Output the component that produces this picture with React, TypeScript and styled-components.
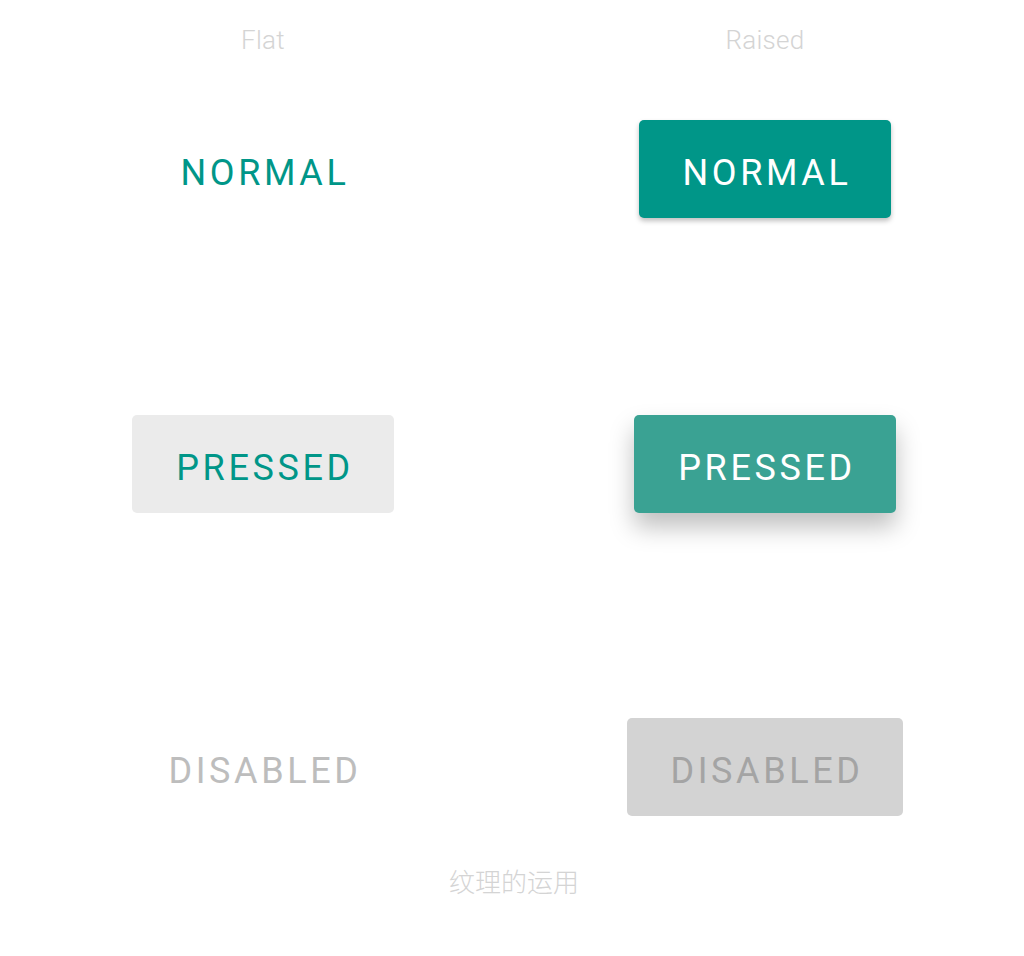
import React from "react";
import styled, { createGlobalStyle, css } from "styled-components";

const GlobalStyle = createGlobalStyle`
  body {
    margin: 0;
    background: #ffffff;
    font-family: Roboto, sans-serif;
  }
`;

const Page = styled.div`
  width: 1004px;
  margin-left: 12px;
  display: flex;
  flex-direction: column;
`;

interface IRowProps {
  top: number;
  height: number;
}

const Row = styled.div<IRowProps>`
  display: grid;
  grid-template-columns: 1fr 1fr;
  margin-top: ${(p) => p.top}px;
  height: ${(p) => p.height}px;
`;

const Cell = styled.div`
  display: flex;
  align-items: center;
  justify-content: center;
`;

const Heading = styled.span`
  font-family: Roboto, sans-serif;
  font-weight: 300;
  font-size: 26px;
  letter-spacing: 0.3px;
  color: #d4d4d4;
`;

type Variant = "normal" | "pressed" | "disabled";

interface IButtonProps {
  variant: Variant;
}

const buttonBase = css`
  height: 98px;
  padding: 7px 40px 0 44px;
  box-sizing: border-box;
  border: none;
  border-radius: 5px;
  display: flex;
  align-items: center;
  justify-content: center;
  font-family: Roboto, sans-serif;
  font-size: 36px;
  font-weight: 400;
  letter-spacing: 3.6px;
  text-transform: uppercase;
`;

const FlatButton = styled.div<IButtonProps>`
  ${buttonBase};
  background: ${(p) => (p.variant === "pressed" ? "#ebebeb" : "transparent")};
  color: ${(p) => (p.variant === "disabled" ? "#bdbdbd" : "#009688")};
`;

const RaisedButton = styled.div<IButtonProps>`
  ${buttonBase};
  background: ${(p) =>
    p.variant === "normal" ? "#009688" : p.variant === "pressed" ? "#3aa293" : "#d3d3d3"};
  color: ${(p) => (p.variant === "disabled" ? "#a4a4a4" : "#ffffff")};
  box-shadow: ${(p) =>
    p.variant === "normal"
      ? "0 3px 5px rgba(0,0,0,0.25)"
      : p.variant === "pressed"
      ? "0 14px 24px rgba(0,0,0,0.25)"
      : "none"};
`;

const Caption = styled.div`
  margin-top: 50px;
  text-align: center;
  font-family: "Noto Sans CJK SC", sans-serif;
  font-weight: 300;
  font-size: 26px;
  line-height: 30px;
  color: #d4d4d4;
`;

const rows: { label: string; variant: Variant; top: number }[] = [
  { label: "Normal", variant: "normal", top: 40 },
  { label: "Pressed", variant: "pressed", top: 197 },
  { label: "Disabled", variant: "disabled", top: 205 },
];

function App() {
  return (
    <>
      <GlobalStyle />
      <Page>
        <Row top={0} height={80}>
          <Cell>
            <Heading>Flat</Heading>
          </Cell>
          <Cell>
            <Heading>Raised</Heading>
          </Cell>
        </Row>
        {rows.map((row) => (
          <Row top={row.top} height={98} key={row.variant}>
            <Cell>
              <FlatButton variant={row.variant}>{row.label}</FlatButton>
            </Cell>
            <Cell>
              <RaisedButton variant={row.variant}>{row.label}</RaisedButton>
            </Cell>
          </Row>
        ))}
        <Caption>纹理的运用</Caption>
      </Page>
    </>
  );
}

export default App;
